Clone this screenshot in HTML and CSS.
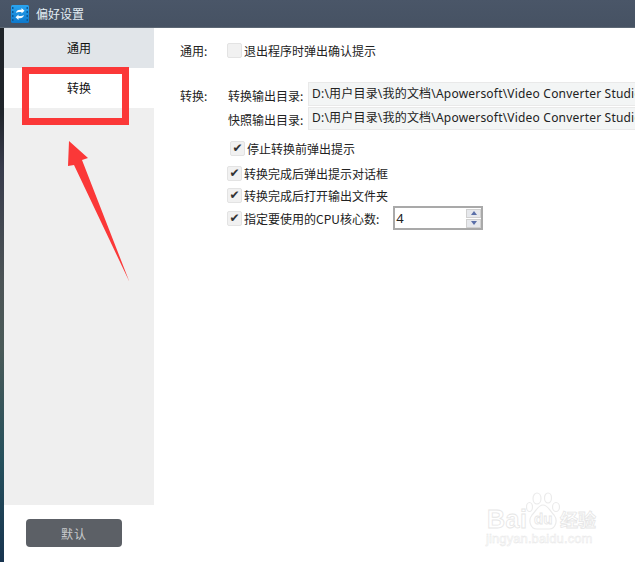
FILE: index.html
```html
<!DOCTYPE html>
<html lang="zh-CN">
<head>
<meta charset="utf-8">
<title>偏好设置</title>
<link rel="stylesheet" href="styles.css">
</head>
<body>
<div class="desktop-edge"></div>
<div class="window">
  <header class="titlebar">
    <svg class="app-icon" width="18" height="18" viewBox="0 0 18 18" aria-hidden="true">
      <defs>
        <linearGradient id="ic" x1="0" y1="0" x2="0" y2="1">
          <stop offset="0" stop-color="#2aa4f0"/>
          <stop offset="1" stop-color="#0d78cc"/>
        </linearGradient>
      </defs>
      <rect width="18" height="18" rx="1.500" fill="url(#ic)"/>
      <path d="M1 2h1.500v2H1zM1 6h1.500v2H1zM1 10h1.500v2H1zM1 14h1.500v2H1zM15.500 2H17v2h-1.500zM15.500 6H17v2h-1.500zM15.500 10H17v2h-1.500zM15.500 14H17v2h-1.500z" fill="#0a5b9c"/>
      <path d="M5 8c.3-2 1.800-3.200 4-3.200h1.500V3l3 2.800-3 2.700V7H9C7.500 7 6 7.200 5 8z" fill="#fff"/>
      <path d="M13 10c-.3 2-1.800 3.200-4 3.200H7.500V15l-3-2.800 3-2.700V11H9c1.500 0 3-.2 4-1z" fill="#f0f9ff"/>
    </svg>
    <span class="title">偏好设置</span>
  </header>
  <div class="body">
    <aside class="sidebar">
      <div class="tab tab-general">通用</div>
      <div class="tab tab-convert">转换</div>
      <div class="side-fill"></div>
      <div class="side-foot"><button class="default-btn">默认</button></div>
    </aside>
    <main class="content">
      <section class="row-general">
        <span class="head">通用:</span>
        <span class="box"></span>
        <span class="lbl">退出程序时弹出确认提示</span>
      </section>
      <section class="row-convert">
        <span class="head head-convert">转换:</span>
        <div class="paths">
          <div class="path-row">
            <span class="path-lbl">转换输出目录:</span>
            <div class="path-val">D:\用户目录\我的文档\Apowersoft\Video Converter Studio</div>
          </div>
          <div class="path-row">
            <span class="path-lbl">快照输出目录:</span>
            <div class="path-val">D:\用户目录\我的文档\Apowersoft\Video Converter Studio</div>
          </div>
        </div>
      </section>
      <section class="checks">
        <div class="check check-first"><span class="box on">✔</span><span class="lbl">停止转换前弹出提示</span></div>
        <div class="check"><span class="box on">✔</span><span class="lbl">转换完成后弹出提示对话框</span></div>
        <div class="check"><span class="box on">✔</span><span class="lbl">转换完成后打开输出文件夹</span></div>
        <div class="check check-cpu">
          <span class="box on">✔</span><span class="lbl">指定要使用的CPU核心数:</span>
          <div class="spin">
            <span class="spin-val">4</span>
            <div class="spin-btns">
              <span class="spin-btn"><i class="tri up"></i></span>
              <span class="spin-btn"><i class="tri down"></i></span>
            </div>
          </div>
        </div>
      </section>
    </main>
  </div>
</div>

<div class="red-box"></div>
<svg class="red-arrow" width="635" height="562" viewBox="0 0 635 562" aria-hidden="true">
  <path d="M69 141L88 158 82 160 129.500 282 74 165 68 166z" fill="#fb3838"/>
</svg>

<div class="watermark">
  <svg class="wm-paw" width="36" height="40" viewBox="0 0 36 40" aria-hidden="true">
    <g fill="#fff" stroke="#ebebeb" stroke-width="1.200">
      <ellipse cx="12" cy="6.500" rx="4" ry="5.500"/>
      <ellipse cx="23" cy="6" rx="3.500" ry="5"/>
      <ellipse cx="4.500" cy="15" rx="3" ry="4.500"/>
      <ellipse cx="31" cy="15" rx="3.500" ry="4.500"/>
      <path d="M18 13c5 0 7 6 11 10 4 5 2 14-5 14H12c-7 0-9-9-5-14 4-4 6-10 11-10z"/>
    </g>
  </svg>
  <span class="wm-bai">Bai</span>
  <span class="wm-du">du</span>
  <span class="wm-jy">经验</span>
  <span class="wm-url">jingyan.baidu.com</span>
</div>
</body>
</html>
```
FILE: styles.css
```css
* { box-sizing: border-box; }
html, body { height: 100%; }
body {
  margin: 0;
  width: 635px;
  height: 562px;
  overflow: hidden;
  display: flex;
  position: relative;
  background: #fff;
  font-family: "Noto Sans CJK SC", "Noto Sans", sans-serif;
  font-size: 12px;
  color: #222;
}
.desktop-edge {
  width: 4px;
  flex: none;
  background: linear-gradient(#1d2227 0%, #20252b 20%, #383c4c 30%, #4c5456 50%, #4a5a58 62%, #25505c 82%, #18344f 100%);
}
.window { flex: 1; min-width: 0; display: flex; flex-direction: column; }
.titlebar {
  height: 28px;
  flex: none;
  display: flex;
  align-items: center;
  gap: 7px;
  background: linear-gradient(#4a5668, #465263);
  border-bottom: 1px solid #5d6875;
  color: #e4edf4;
  font-size: 12px;
  margin-left: -4px;
  padding-left: 11px;
}
.app-icon { flex: none; }
.body { flex: 1; display: flex; min-height: 0; }
.sidebar { width: 150px; flex: none; display: flex; flex-direction: column; }
.tab { height: 40px; flex: none; display: flex; align-items: center; justify-content: center; font-size: 12px; color: #111; padding-bottom: 1px; }
.tab-general { background: #e1e5e9; }
.tab-convert { background: #fff; }
.side-fill { flex: 1; background: #efefef; }
.side-foot { height: 57px; flex: none; padding: 14px 0 0 22px; }
.default-btn {
  display: block;
  width: 96px;
  height: 28px;
  padding: 0;
  border: 0;
  border-radius: 4px;
  background: #5c6066;
  color: #c8cacc;
  font: 12px "Noto Sans CJK SC", sans-serif;
  letter-spacing: 1px;
}
.content { flex: 1; min-width: 0; overflow: hidden; padding: 15px 0 0 26px; }
.head { width: 47px; flex: none; color: #222; }
.row-general { display: flex; align-items: center; height: 14px; }
.box {
  width: 15px;
  height: 15px;
  flex: none;
  display: flex;
  align-items: center;
  justify-content: center;
  background: #f1f1f1;
  border: 1px solid #e3e3e3;
  border-radius: 2px;
  color: #333;
  font: 12px/1 "DejaVu Sans", sans-serif;
}
.lbl { margin-left: 2px; white-space: nowrap; }
.row-convert { display: flex; margin-top: 25px; }
.head-convert { width: 48px; padding-top: 5px; }
.paths { display: flex; flex-direction: column; gap: 2px; min-width: 0; }
.path-row { display: flex; align-items: center; }
.path-lbl { width: 80px; flex: none; white-space: nowrap; padding-top: 2px; }
.path-val {
  width: 340px;
  flex: none;
  height: 24px;
  padding: 0 0 3px 3px;
  display: flex;
  align-items: center;
  white-space: nowrap;
  overflow: hidden;
  background: #f3f5f5;
  border: 1px solid #e9e9e9;
  font-family: "Noto Sans", "Noto Sans CJK SC", sans-serif;
  letter-spacing: 0.2px;
}
.path-row + .path-row .path-val { height: 23px; }
.path-row + .path-row { margin-top: -1px; }
.checks { display: flex; flex-direction: column; margin-top: 7px; padding-left: 47px; }
.check { display: flex; align-items: center; height: 22px; }
.check-first { padding-left: 3px; margin-bottom: 3px; }
.check-cpu { height: 24px; }
.spin {
  margin-left: 14px;
  width: 90px;
  height: 24px;
  display: flex;
  align-items: center;
  justify-content: space-between;
  border: 2px solid #a9a9a9;
  padding: 0 0 0 1px;
}
.spin-val { font-family: "Noto Sans", sans-serif; font-size: 13px; }
.spin-btns { width: 15px; display: flex; flex-direction: column; gap: 1px; }
.spin-btn { height: 9px; display: flex; align-items: center; justify-content: center; background: #e6e8ec; border: 1px solid #d0d0d0; }
.tri { width: 0; height: 0; border-left: 3.500px solid transparent; border-right: 3.500px solid transparent; }
.tri.up { border-bottom: 4px solid #5a6fa8; }
.tri.down { border-top: 4px solid #5a6fa8; }

.red-box {
  position: absolute;
  left: 22px;
  top: 67px;
  width: 107px;
  height: 58px;
  border: 7px solid #fb3838;
}
.red-arrow { position: absolute; left: 0; top: 0; pointer-events: none; }

.watermark {
  position: absolute;
  left: 486px;
  top: 492px;
  width: 120px;
  height: 60px;
  color: #fff;
  -webkit-text-stroke: 0.8px #e6e6e6;
  font-family: "Liberation Sans", sans-serif;
  pointer-events: none;
}
.wm-paw { position: absolute; left: 39px; top: 0; }
.wm-bai { position: absolute; left: 1px; top: 13px; font-size: 25px; line-height: 28px; font-weight: 700; letter-spacing: 0.5px; }
.wm-du { position: absolute; left: 48px; top: 18px; font-size: 15px; line-height: 18px; font-weight: 700; }
.wm-jy { position: absolute; left: 74px; top: 15px; font: 700 18px/24px "Noto Sans CJK SC", sans-serif; }
.wm-url { position: absolute; left: 0; top: 39px; font-size: 13px; line-height: 16px; letter-spacing: 0.1px; font-weight: 400; white-space: nowrap; -webkit-text-stroke: 0.5px #e8e8e8; }
```
